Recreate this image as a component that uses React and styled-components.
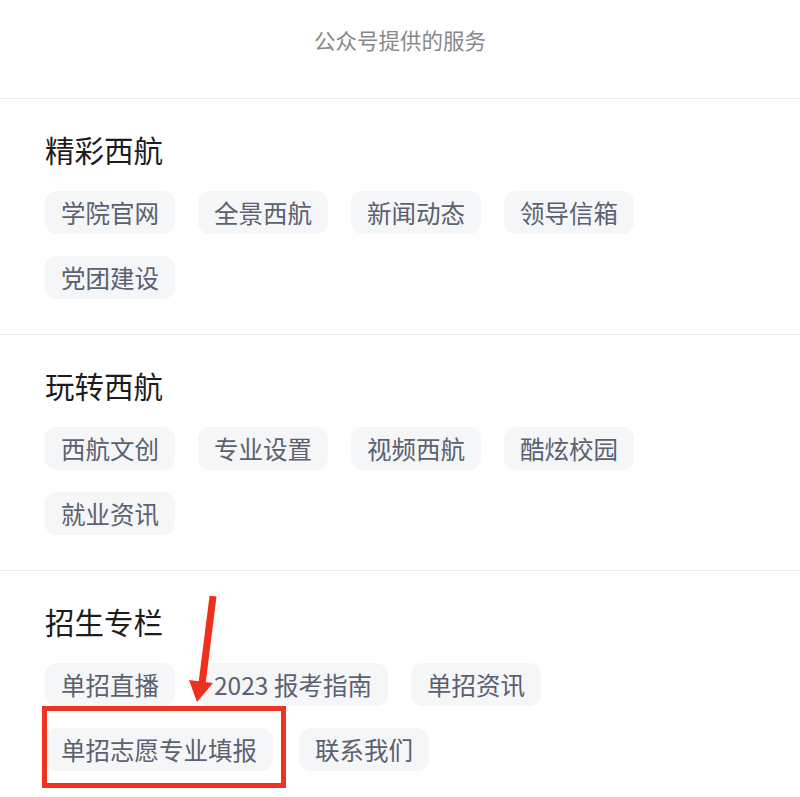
import React from 'react';
import styled, { createGlobalStyle } from 'styled-components';

const sections = [
    {
        title: '精彩西航',
        items: ['学院官网', '全景西航', '新闻动态', '领导信箱', '党团建设'],
    },
    {
        title: '玩转西航',
        items: ['西航文创', '专业设置', '视频西航', '酷炫校园', '就业资讯'],
    },
    {
        title: '招生专栏',
        items: ['单招直播', '2023 报考指南', '单招资讯', '单招志愿专业填报', '联系我们'],
        marked: '单招志愿专业填报',
    },
];

const App = () => {
    return (
        <Page>
            <GlobalStyle />
            <TopBar>公众号提供的服务</TopBar>
            {sections.map((section) => (
                <Section key={section.title}>
                    <SectionTitle>{section.title}</SectionTitle>
                    <ChipList>
                        {section.items.map((item) =>
                            item === section.marked ? (
                                <Marked key={item}>
                                    <Chip>{item}</Chip>
                                    <RedBox />
                                    <Arrow width="34" height="108" viewBox="0 0 34 108">
                                        <path d="M28 0 L17 88" stroke="#f0301c" strokeWidth="7" fill="none" />
                                        <path d="M4 84 L28 87 L12 106 Z" fill="#f0301c" />
                                    </Arrow>
                                </Marked>
                            ) : (
                                <Chip key={item}>{item}</Chip>
                            )
                        )}
                    </ChipList>
                </Section>
            ))}
        </Page>
    );
};

export default App;

const GlobalStyle = createGlobalStyle`
    body {
        margin: 0;
        background: #fff;
        font-family: "Noto Sans CJK SC", "Noto Sans", sans-serif;
    }
`;

const Page = styled.div`
    width: 800px;
    min-height: 797px;
    background: #fff;
`;

const TopBar = styled.div`
    height: 99px;
    padding-top: 26px;
    box-sizing: border-box;
    text-align: center;
    font-size: 21.5px;
    line-height: 28px;
    color: #888;
    border-bottom: 1px solid #ececec;
`;

const Section = styled.section`
    padding: 30px 0 35px 45px;
    border-bottom: 1px solid #ececec;

    &:last-child {
        border-bottom: none;
    }
`;

const SectionTitle = styled.h2`
    margin: 0 0 22px;
    font-size: 29.5px;
    line-height: 40px;
    font-weight: 400;
    color: #1c1c1c;
`;

const ChipList = styled.div`
    display: flex;
    flex-wrap: wrap;
    gap: 22px 23px;
    width: 660px;
`;

const Chip = styled.div`
    height: 43px;
    padding: 0 16px;
    display: flex;
    align-items: center;
    background: #f5f6f8;
    border-radius: 12px;
    font-size: 24.5px;
    color: #5a6170;
    white-space: nowrap;
`;

const Marked = styled.div`
    position: relative;
    margin-right: 3px;
`;

const RedBox = styled.div`
    position: absolute;
    left: -3px;
    right: -13px;
    top: -22px;
    bottom: -17px;
    border: 5px solid #ee3420;
    pointer-events: none;
`;

const Arrow = styled.svg`
    position: absolute;
    left: 140px;
    top: -132px;
`;
